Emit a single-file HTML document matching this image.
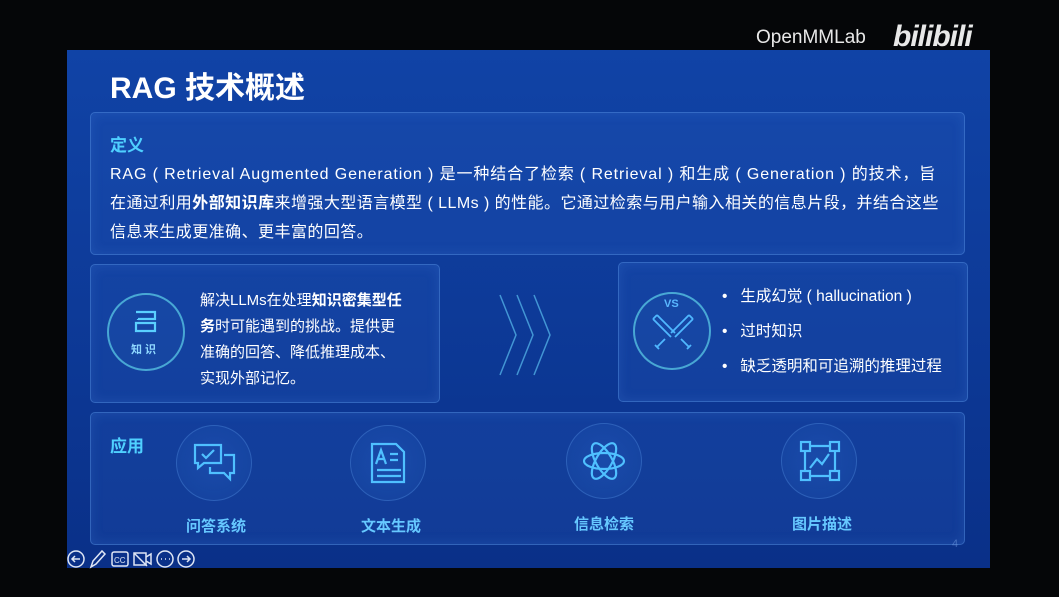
<!DOCTYPE html>
<html><head><meta charset="utf-8"><style>
*{margin:0;padding:0;box-sizing:border-box}
body{width:1059px;height:597px;background:#050608;position:relative;overflow:hidden;font-family:"Liberation Sans","Noto Sans CJK SC",sans-serif;color:#fff}
.slide{position:absolute;left:67px;top:50px;width:923px;height:518px;background:linear-gradient(180deg,#1043a6 0%,#0d3a98 50%,#0a3088 100%)}
.box{position:absolute;border:1px solid rgba(90,150,230,.45);border-radius:5px;background:rgba(40,90,190,.25);box-shadow:inset 0 0 12px rgba(80,140,230,.2)}
.t{position:absolute;white-space:nowrap}
.circ{position:absolute;border-radius:50%;border:2px solid rgba(90,200,230,.75);background:rgba(30,80,170,.35)}
.ic{position:absolute;border-radius:50%;background:radial-gradient(circle,rgba(40,100,200,.35),rgba(30,80,170,.25));border:1px solid rgba(90,150,230,.35)}
.lab{position:absolute;color:#66c8ff;font-size:15px;font-weight:bold;white-space:nowrap}
</style></head><body>
<div class="t" style="left:756px;top:27px;font-size:19px;color:#e8e8e8">OpenMMLab</div>
<div class="t" style="left:893px;top:20px;font-size:30px;font-weight:bold;color:#e8e8e8;letter-spacing:-1px;font-style:italic">bilibili</div>
<div class="slide"></div>
<div class="t" style="left:110px;top:63px;font-size:30px;font-weight:bold">RAG 技术概述</div>

<div class="box" style="left:90px;top:112px;width:875px;height:143px"></div>
<div class="t" style="left:110px;top:131px;font-size:17px;font-weight:bold;color:#4fd0ff">定义</div>
<div class="t" style="left:110px;top:160px;font-size:16px;line-height:29px;color:#fff;letter-spacing:0.88px">RAG ( Retrieval Augmented Generation ) 是一种结合了检索 ( Retrieval ) 和生成 ( Generation ) 的技术，旨</div>
<div class="t" style="left:110px;top:189px;font-size:16px;line-height:29px;color:#fff;letter-spacing:0.45px">在通过利用<b>外部知识库</b>来增强大型语言模型 ( LLMs ) 的性能。它通过检索与用户输入相关的信息片段，并结合这些</div>
<div class="t" style="left:110px;top:218px;font-size:16px;line-height:29px;color:#fff;letter-spacing:0.45px">信息来生成更准确、更丰富的回答。</div>

<div class="box" style="left:90px;top:264px;width:350px;height:139px"></div>
<div class="circ" style="left:107px;top:293px;width:78px;height:78px"></div>
<svg style="position:absolute;left:133px;top:310px" width="26" height="24" viewBox="0 0 26 24" fill="none" stroke="#5ad0ff" stroke-width="2.2"><path d="M3 2h19v7H5M5 9v1M3 13h19v8H3z"/></svg>
<div class="t" style="left:131px;top:341px;font-size:11px;color:#8fd8ff;font-weight:bold">知 识</div>
<div class="t" style="left:200px;top:288px;font-size:15px;line-height:26px">解决LLMs在处理<b>知识密集型任</b><br><b>务</b>时可能遇到的挑战。提供更<br>准确的回答、降低推理成本、<br>实现外部记忆。</div>

<svg style="position:absolute;left:495px;top:293px" width="80" height="85" viewBox="0 0 80 85" fill="none" stroke="rgba(90,190,240,.7)" stroke-width="1.5"><path d="M5 2l16 40-16 40M22 2l16 40-16 40M39 2l16 40-16 40"/></svg>

<div class="box" style="left:618px;top:262px;width:350px;height:140px"></div>
<div class="circ" style="left:633px;top:292px;width:78px;height:78px"></div>
<div class="t" style="left:664px;top:298px;font-size:11px;color:#5ab8ff;font-weight:bold">VS</div>
<svg style="position:absolute;left:649px;top:311px" width="48" height="44" viewBox="0 0 48 44" fill="none" stroke="#4fb8ff" stroke-width="1.8"><path d="M8 4l18 18M4 8l18 18M4 8l4-4M40 4L22 22M44 8L26 26M44 8l-4-4M16 28l-8 8M32 28l8 8M6 34l4 4M42 34l-4 4"/></svg>
<div class="t" style="left:722px;top:279px;font-size:15.5px;line-height:35px">•&nbsp;&nbsp;&nbsp;生成幻觉 ( hallucination )<br>•&nbsp;&nbsp;&nbsp;过时知识<br>•&nbsp;&nbsp;&nbsp;缺乏透明和可追溯的推理过程</div>

<div class="box" style="left:90px;top:412px;width:875px;height:133px"></div>
<div class="t" style="left:110px;top:432px;font-size:17px;font-weight:bold;color:#4fd0ff">应用</div>
<div class="ic" style="left:176px;top:425px;width:76px;height:76px"></div>
<svg style="position:absolute;left:192px;top:442px" width="46" height="44" viewBox="0 0 46 44" fill="none" stroke="#4fc0ff" stroke-width="2.2"><path d="M3 3h26v18H12l-6 5v-5H3z M10 12l4 4 8-8 M32 13h10v18h-4v6l-6-6H18v-6"/></svg>
<div class="ic" style="left:350px;top:425px;width:76px;height:76px"></div>
<svg style="position:absolute;left:370px;top:442px" width="36" height="42" viewBox="0 0 36 42" fill="none" stroke="#4fc0ff" stroke-width="2.2"><path d="M2 2h24l8 8v30H2z M6 22l5-14 5 14M8 17h6M20 12h8M20 18h8M7 28h24M7 34h24"/></svg>
<div class="ic" style="left:566px;top:423px;width:76px;height:76px"></div>
<svg style="position:absolute;left:582px;top:439px" width="44" height="44" viewBox="0 0 44 44" fill="none" stroke="#4fc0ff" stroke-width="2.2"><ellipse cx="22" cy="22" rx="20" ry="8"/><ellipse cx="22" cy="22" rx="20" ry="8" transform="rotate(60 22 22)"/><ellipse cx="22" cy="22" rx="20" ry="8" transform="rotate(120 22 22)"/></svg>
<div class="ic" style="left:781px;top:423px;width:76px;height:76px"></div>
<svg style="position:absolute;left:799px;top:440px" width="42" height="42" viewBox="0 0 42 42" fill="none" stroke="#4fc0ff" stroke-width="2.2"><rect x="2" y="2" width="9" height="9"/><rect x="31" y="2" width="9" height="9"/><rect x="2" y="31" width="9" height="9"/><rect x="31" y="31" width="9" height="9"/><path d="M11 6h20M11 36h20M6 11v20M36 11v20M11 28l7-9 5 5 7-10"/></svg>
<div class="lab" style="left:186px;top:515px">问答系统</div>
<div class="lab" style="left:361px;top:515px">文本生成</div>
<div class="lab" style="left:574px;top:513px">信息检索</div>
<div class="lab" style="left:792px;top:513px">图片描述</div>
<div class="t" style="left:952px;top:538px;font-size:11px;color:rgba(120,160,230,.5)">4</div>

<svg style="position:absolute;left:66px;top:548px" width="135" height="22" viewBox="0 0 135 22" fill="none" stroke="#dfe6f5" stroke-width="1.5"><circle cx="10" cy="11" r="8"/><path d="M14 11H6M9 8l-3 3 3 3"/><path d="M25 19l2-6 9-10 3 3-9 10z"/><rect x="46" y="4" width="16" height="14" rx="2"/><text x="48" y="15" font-size="8" fill="#dfe6f5" stroke="none" font-family="Liberation Sans">CC</text><rect x="68" y="5" width="12" height="12"/><path d="M80 9l5-3v10l-5-3M68 5l13 13"/><circle cx="99" cy="11" r="8"/><path d="M95 11h1M99 11h1M103 11h1"/><circle cx="120" cy="11" r="8"/><path d="M116 11h8M121 8l3 3-3 3"/></svg>
</body></html>
